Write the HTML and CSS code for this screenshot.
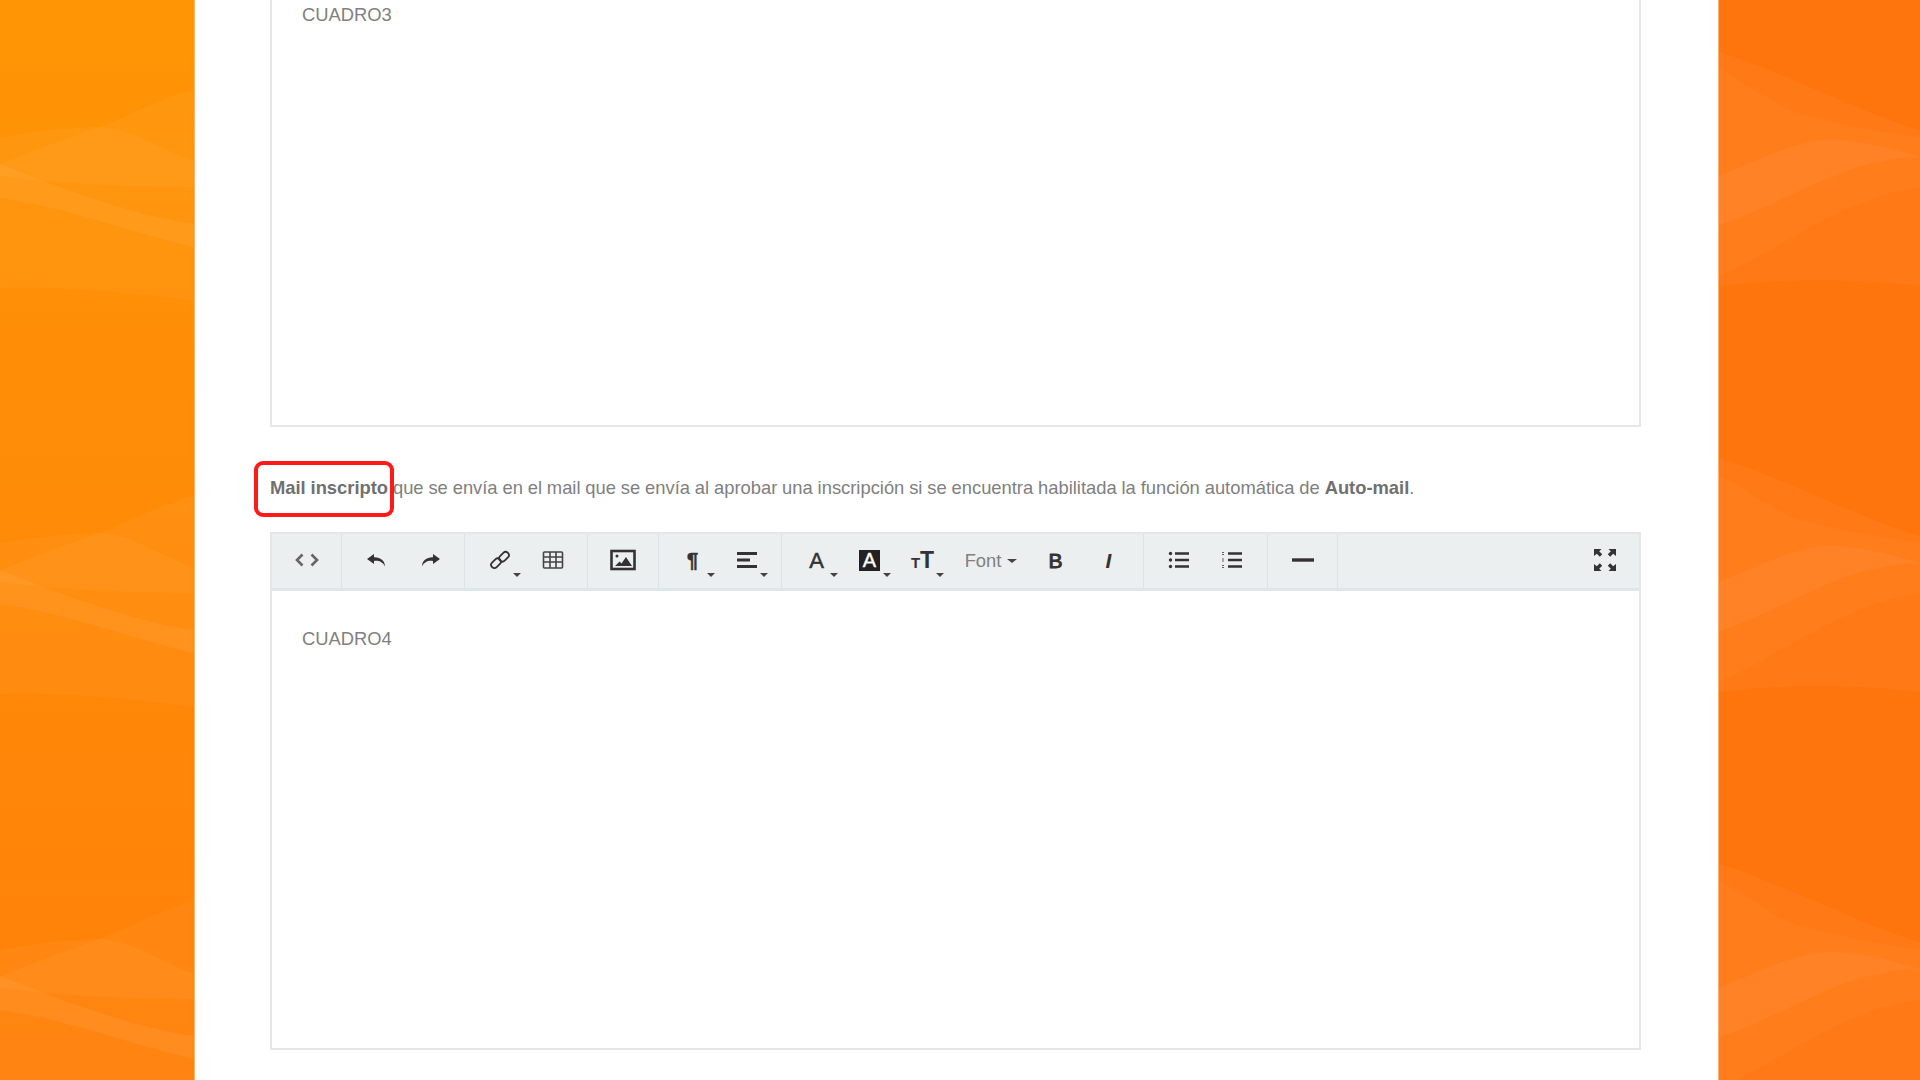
FILE: index.html
```html
<!DOCTYPE html>
<html lang="es">
<head>
<meta charset="utf-8">
<title>Mail inscripto</title>
<link rel="stylesheet" href="styles.css">
</head>
<body>
<aside class="side side-left">
  <svg class="waves" width="100%" height="100%" aria-hidden="true">
    <defs>
      <pattern id="waveL" width="194" height="406" patternUnits="userSpaceOnUse">
        <path class="w1" d="M0 165 C20 156 60 141 100 127 C130 116 165 96 194 90 V187 C130 186 60 184 0 176Z"/>
        <path class="w1" d="M0 138 C30 132 70 127 100 127 C130 128 165 152 194 162 V301 C130 292 60 286 0 288Z"/>
        <path class="w2" d="M0 164 C40 180 130 216 194 224 V247 C130 232 60 205 0 198Z"/>
      </pattern>
    </defs>
    <rect width="100%" height="100%" fill="url(#waveL)"/>
  </svg>
</aside>
<main class="page">
  <section class="editor editor-cut">
    <p class="note-text note-text-cut">CUADRO3</p>
  </section>
  <p class="intro"><span class="highlight"><strong>Mail inscripto</strong><span class="red-box"></span></span> que se envía en el mail que se envía al aprobar una inscripción si se encuentra habilitada la función automática de <strong>Auto-mail</strong>.</p>
  <section class="editor">
    <div class="toolbar">
      <div class="group">
        <button class="btn" type="button"><svg width="26" height="16" viewBox="0 0 26 16"><path class="line soft" d="M8.5 2.5 3 8l5.500 5.500M17.500 2.500 23 8l-5.500 5.500"/></svg></button>
      </div>
      <div class="group">
        <button class="btn" type="button"><svg width="22" height="14" viewBox="0 0 22 14"><path class="solid" d="M8 1 1 6l7 5V8c4-.5 8 0 11 5.500C19 7.500 14 4 8 4.300Z"/></svg></button>
        <button class="btn" type="button"><svg width="22" height="14" viewBox="0 0 22 14"><path class="solid" d="M14 1l7 5-7 5V8c-4-.5-8 0-11 5.500C3 7.500 8 4 14 4.300Z"/></svg></button>
      </div>
      <div class="group">
        <button class="btn" type="button"><svg width="22" height="22" viewBox="0 0 22 22"><rect class="line thin" x="1.500" y="11" width="11" height="6.500" rx="3.200" transform="rotate(-45 7 14.250)"/><rect class="line thin" x="9.500" y="4.500" width="11" height="6.500" rx="3.200" transform="rotate(-45 15 7.750)"/></svg><span class="caret caret-drop"></span></button>
        <button class="btn" type="button"><svg width="22" height="20" viewBox="0 0 22 20"><path class="line grid" d="M2.500 2h17a1 1 0 0 1 1 1v14a1 1 0 0 1-1 1h-17a1 1 0 0 1-1-1V3a1 1 0 0 1 1-1ZM1.500 7h19M1.500 12h19M8 2v16M14 2v16"/></svg></button>
      </div>
      <div class="group group-single">
        <button class="btn" type="button"><svg width="28" height="24" viewBox="0 0 28 24"><rect class="line pic" x="2.500" y="3" width="23" height="18"/><circle class="solid" cx="8" cy="8" r="1.500"/><path class="solid" d="M6 18l4.500-4.500 2 2L17 9l6 9Z"/></svg></button>
      </div>
      <div class="group">
        <button class="btn" type="button"><span class="glyph glyph-para">¶</span><span class="caret caret-drop"></span></button>
        <button class="btn" type="button"><svg width="22" height="18" viewBox="0 0 22 18"><path class="line bars" d="M1 2.500h20M1 9h13M1 15.500h20"/></svg><span class="caret caret-drop"></span></button>
      </div>
      <div class="group">
        <button class="btn" type="button"><span class="glyph glyph-a">A</span><span class="caret caret-drop"></span></button>
        <button class="btn" type="button"><span class="glyph glyph-box">A</span><span class="caret caret-drop"></span></button>
        <button class="btn btn-size" type="button"><span class="glyph glyph-small">T</span><span class="glyph glyph-big">T</span><span class="caret caret-drop"></span></button>
        <button class="btn btn-font" type="button">Font<span class="caret caret-inline"></span></button>
        <button class="btn" type="button"><span class="glyph glyph-b">B</span></button>
        <button class="btn" type="button"><span class="glyph glyph-i">I</span></button>
      </div>
      <div class="group group-single">
        <button class="btn" type="button"><svg width="22" height="18" viewBox="0 0 22 18"><path class="line bars-s" d="M7 2.500h14M7 9h14M7 15.500h14"/><circle class="solid" cx="2.500" cy="2.500" r="1.700"/><circle class="solid" cx="2.500" cy="9" r="1.700"/><circle class="solid" cx="2.500" cy="15.500" r="1.700"/></svg></button>
        <button class="btn" type="button"><svg width="22" height="18" viewBox="0 0 22 18"><path class="line bars-s" d="M7 2.500h14M7 9h14M7 15.500h14"/><path class="line ticks" d="M2 1v3M2 7.500v3M2 14v3"/></svg></button>
      </div>
      <div class="group">
        <button class="btn" type="button"><svg width="22" height="6" viewBox="0 0 22 6"><path class="line rule" d="M0 3h22"/></svg></button>
      </div>
      <div class="group group-end">
        <button class="btn" type="button"><svg width="24" height="24" viewBox="0 0 24 24"><path class="solid" d="M1 1h7.500L6.200 3.300l3 3-2.400 2.400-3-3L1 8ZM23 1h-7.500l2.300 2.300-3 3 2.400 2.400 3-3L23 8ZM1 23h7.500l-2.300-2.300 3-3-2.400-2.400-3 3L1 16ZM23 23h-7.500l2.300-2.300-3-3 2.400-2.400 3 3L23 16Z"/></svg></button>
      </div>
    </div>
    <p class="note-text">CUADRO4</p>
  </section>
</main>
<aside class="side side-right">
  <svg class="waves" width="100%" height="100%" aria-hidden="true">
    <defs>
      <pattern id="waveR" width="202" height="406" patternUnits="userSpaceOnUse">
        <path class="w1" d="M0 52 C70 75 140 112 202 131 V286 C140 278 60 278 0 286Z"/>
        <path class="w3" d="M0 69 C30 85 60 108 82 114 C120 125 165 132 202 138 V187 C130 195 60 250 0 276Z"/>
        <path class="w2" d="M0 176 C40 160 80 140 109 140 C145 140 185 152 202 158 C190 156 175 158 160 162 C110 170 60 205 0 225Z"/>
      </pattern>
    </defs>
    <rect width="100%" height="100%" fill="url(#waveR)"/>
  </svg>
</aside>
</body>
</html>
```
FILE: styles.css
```css
* { box-sizing: border-box; }
html, body { height: 100%; }
body {
  margin: 0;
  display: flex;
  height: 1080px;
  overflow: hidden;
  background: #fff;
  font-family: "Liberation Sans", Arial, sans-serif;
  font-size: 18.37px;
  color: #808080;
}
.side { flex: none; height: 100%; }
.side-left {
  width: 194.5px;
  background: linear-gradient(180deg, #ff9505 0%, #ff8009 100%);
  border-right: 1px solid #ffb566;
}
.side-right {
  width: 202px;
  background: #ff750d;
  border-left: 1px solid #ffb077;
}
.waves { display: block; }
.w1 { fill: rgba(255, 255, 255, .035); }
.w2 { fill: rgba(255, 255, 255, .05); }
.w3 { fill: rgba(255, 255, 255, .02); }
.page {
  flex: 1;
  min-width: 0;
  padding: 0 77px 0 75.5px;
}
.editor {
  border: 2px solid #e4e6e7;
  height: 518px;
}
.editor-cut {
  height: 426.5px;
  border-top: 0;
}
.note-text {
  margin: 0;
  padding: 35px 0 0 30px;
  line-height: 26px;
}
.note-text-cut { padding-top: 2px; }
.intro {
  margin: 48.5px 0 31px;
  line-height: 26px;
  white-space: nowrap;
  word-spacing: -.25px;
}
.highlight { position: relative; }
.red-box {
  position: absolute;
  left: -16px;
  top: -16px;
  width: 139.5px;
  height: 55.5px;
  border: 4px solid #ff1a1a;
  border-radius: 9px;
}
.toolbar {
  display: flex;
  height: 57px;
  background: #ebeff0;
  border-bottom: 3px solid #dfe6e8;
}
.group {
  display: flex;
  padding: 0 8px;
  border-right: 1px solid #dce3e5;
}
.group-single { padding-right: 9px; }
.group-end {
  flex: 1;
  justify-content: flex-end;
  border-right: 0;
}
.btn {
  position: relative;
  display: flex;
  align-items: center;
  justify-content: center;
  width: 53px;
  height: 52px;
  padding: 0;
  border: 0;
  background: none;
  font: inherit;
  color: #808080;
}
.btn-font { width: 80px; margin-top: 1px; padding-left: 4px; }
.btn-size { align-items: baseline; padding-top: 15px; }
.caret {
  display: block;
  width: 0;
  height: 0;
  border-left: 4px solid transparent;
  border-right: 4px solid transparent;
  border-top: 4px solid #444;
}
.caret-drop { position: absolute; left: 40px; top: 39px; }
.caret-inline { margin-left: 6px; border-left-width: 5px; border-right-width: 5px; }
.line { fill: none; stroke: #333; }
.soft { stroke: #666; stroke-width: 2.6; }
.thin { stroke-width: 1.8; }
.grid { stroke-width: 1.6; stroke: #444; }
.pic { stroke-width: 2.6; }
.bars { stroke-width: 3; }
.bars-s { stroke-width: 2.6; }
.ticks { stroke-width: 1.5; stroke-dasharray: 1 1; }
.rule { stroke-width: 3.4; }
.solid { fill: #333; }
.glyph { color: #333; line-height: 1; }
.glyph-para {
  font-size: 20px;
  font-weight: 700;
  margin-right: 2px;
  -webkit-text-stroke: .6px #333;
}
.glyph-a { font-size: 22px; margin: 2px 0 0; -webkit-text-stroke: .5px #333; }
.glyph-box {
  display: block;
  width: 21px;
  height: 21px;
  background: #222;
  color: #fff;
  font-size: 20px;
  font-weight: 400;
  -webkit-text-stroke: .4px #fff;
  line-height: 21px;
  text-align: center;
}
.glyph-small { font-size: 15px; font-weight: 700; }
.glyph-big { font-size: 23px; font-weight: 700; }
.glyph-b { font-size: 21px; -webkit-text-stroke: 1px #333; }
.glyph-i { font-size: 21px; font-weight: 700; font-style: italic; }
strong { color: #707070; }
```
